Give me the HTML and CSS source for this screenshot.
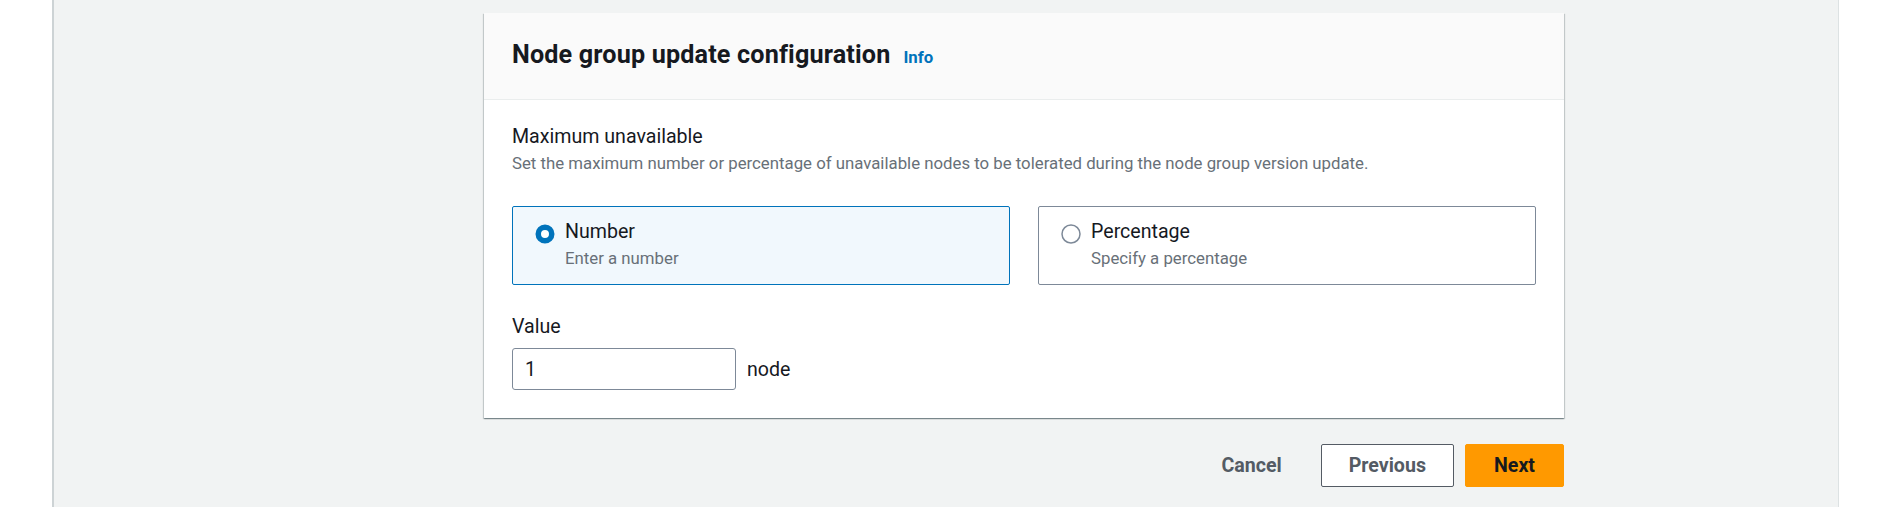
FILE: index.html
```html
<!DOCTYPE html>
<html lang="en">
<head>
<meta charset="utf-8">
<title>Node group update configuration</title>
<link rel="stylesheet" href="styles.css">
</head>
<body>
<div class="page">
  <div class="main">
    <section class="card">
      <header class="card-header">
        <h2 class="title">Node group update configuration</h2>
        <a class="info" href="#">Info</a>
      </header>
      <div class="card-body">
        <div class="label">Maximum unavailable</div>
        <div class="desc">Set the maximum number or percentage of unavailable nodes to be tolerated during the node group version update.</div>
        <div class="tiles">
          <div class="tile selected">
            <svg class="radio" width="20" height="20" viewBox="0 0 20 20"><circle cx="10" cy="10" r="6.75" fill="#fff" stroke="#0073bb" stroke-width="5.5"/></svg>
            <div class="tile-text">
              <div class="tile-label">Number</div>
              <div class="tile-desc">Enter a number</div>
            </div>
          </div>
          <div class="tile">
            <svg class="radio" width="20" height="20" viewBox="0 0 20 20"><circle cx="10" cy="10" r="9" fill="#fff" stroke="#7d8998" stroke-width="1.5"/></svg>
            <div class="tile-text">
              <div class="tile-label">Percentage</div>
              <div class="tile-desc">Specify a percentage</div>
            </div>
          </div>
        </div>
        <div class="label value-label">Value</div>
        <div class="input-row">
          <input class="input" type="text" value="1" readonly>
          <span class="unit">node</span>
        </div>
      </div>
    </section>
    <div class="actions">
      <button class="btn btn-link">Cancel</button>
      <button class="btn btn-normal">Previous</button>
      <button class="btn btn-primary">Next</button>
    </div>
  </div>
</div>
</body>
</html>
```

FILE: styles.css
```css
* { box-sizing: border-box; }
html, body { margin: 0; padding: 0; background: #ffffff; }
body {
  font-family: Roboto, "Liberation Sans", Arial, sans-serif;
  color: #16191f;
  height: 507px;
  overflow: hidden;
}
.page {
  margin-left: 52px;
  width: 1787px;
  height: 507px;
  background: #f1f3f3;
  border-left: 2px solid #cdd3d5;
  border-right: 1px solid #dde2e3;
  padding: 13px 0 0 430px;
}
.main {
  width: 1080px;
}
.card {
  background: #ffffff;
  box-shadow: 0 1px 1px 0 rgba(0, 28, 36, 0.3), 1px 1px 1px 0 rgba(0, 28, 36, 0.15), -1px 1px 1px 0 rgba(0, 28, 36, 0.15);
}
.card-header {
  display: flex;
  align-items: baseline;
  background: #fafafa;
  border-bottom: 1px solid #eaeded;
  padding: 27px 28px 29px;
}
.title {
  margin: 0;
  font-size: 25.2px;
  line-height: 30px;
  font-weight: 700;
  letter-spacing: 0.15px;
  color: #16191f;
}
.info {
  margin-left: 13px;
  font-size: 16.8px;
  font-weight: 700;
  color: #0073bb;
  text-decoration: none;
}
.card-body {
  padding: 25px 28px 28px;
}
.label {
  font-size: 19.6px;
  line-height: 24px;
  color: #16191f;
}
.desc {
  margin-top: 3px;
  font-size: 16.8px;
  line-height: 22px;
  color: #687078;
}
.tiles {
  display: grid;
  grid-template-columns: 1fr 1fr;
  gap: 28px;
  margin-top: 32px;
}
.tile {
  display: flex;
  align-items: flex-start;
  gap: 10px;
  height: 79px;
  padding: 13px 22px 0;
  border: 1px solid #7d8998;
  border-radius: 2px;
  background: #ffffff;
}
.tile.selected {
  background: #f1f8fd;
  border-color: #0073bb;
}
.radio {
  flex: none;
  margin-top: 4px;
}
.tile-label {
  font-size: 19.6px;
  line-height: 24px;
  color: #16191f;
}
.tile-desc {
  margin-top: 3px;
  font-size: 16.8px;
  line-height: 22px;
  color: #687078;
}
.value-label {
  margin-top: 30px;
}
.input-row {
  display: flex;
  align-items: center;
  gap: 11px;
  margin-top: 9px;
}
.input {
  width: 224px;
  height: 42px;
  border: 1px solid #7d8998;
  border-radius: 3px;
  padding: 0 12px;
  font-family: inherit;
  font-size: 19.6px;
  color: #16191f;
  background: #ffffff;
  outline: none;
}
.unit {
  font-size: 19.6px;
  color: #16191f;
}
.actions {
  display: flex;
  justify-content: flex-end;
  gap: 11px;
  margin-top: 26px;
}
.btn {
  height: 43px;
  padding: 0 27px;
  font-family: inherit;
  font-size: 19.6px;
  font-weight: 700;
  border-radius: 2px;
  border: 1px solid transparent;
  background: transparent;
  cursor: pointer;
}
.btn-link {
  color: #545b64;
}
.btn-normal {
  color: #545b64;
  background: #ffffff;
  border-color: #545b64;
}
.btn-primary {
  padding: 0 28px;
  color: #16191f;
  background: #ff9900;
  border-color: #ff9900;
}
```
